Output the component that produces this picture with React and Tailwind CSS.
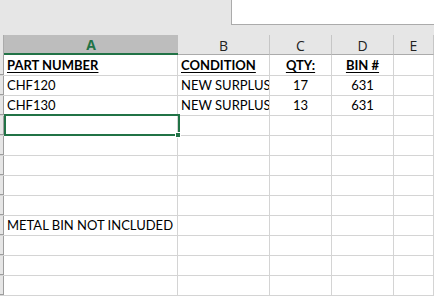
import React from "react";

const cols = [
  { key: "A", w: "w-[174px]" },
  { key: "B", w: "w-[92px]" },
  { key: "C", w: "w-[62px]" },
  { key: "D", w: "w-[62px]" },
  { key: "E", w: "flex-1" },
];

const rows = [
  [
    { t: "PART NUMBER", b: true },
    { t: "CONDITION", b: true },
    { t: "QTY:", b: true, c: true },
    { t: "BIN #", b: true, c: true },
  ],
  [{ t: "CHF120" }, { t: "NEW SURPLUS" }, { t: "17", c: true }, { t: "631", c: true }],
  [{ t: "CHF130" }, { t: "NEW SURPLUS" }, { t: "13", c: true }, { t: "631", c: true }],
  [],
  [],
  [],
  [],
  [],
  [{ t: "METAL BIN NOT INCLUDED", over: true }],
  [],
  [],
  [],
];

function Cell({ col, cell }) {
  return (
    <div
      className={`${col.w} shrink-0 h-full border-r border-[#d4d4d4] flex items-end pb-[1px] ${
        cell && cell.c ? "justify-center" : "px-[3px]"
      } ${cell && cell.over ? "overflow-visible relative z-10" : "overflow-hidden"}`}
    >
      {cell && (
        <span
          className={`whitespace-nowrap leading-[18px] text-[13px] text-black ${
            cell.b ? "font-bold underline underline-offset-2 decoration-[1px]" : ""
          }`}
        >
          {cell.t}
        </span>
      )}
    </div>
  );
}

export default function App() {
  return (
    <div
      className="w-[434px] h-[297px] overflow-hidden bg-white relative"
      style={{ fontFamily: "Lato, 'Open Sans', sans-serif" }}
    >
      {/* formula bar area */}
      <div className="h-[35px] bg-[#e6e6e6] flex justify-end">
        <div className="w-[203px] h-[25px] bg-white border-l border-b border-[#ababab]" />
      </div>

      {/* column headers */}
      <div className="h-[20px] flex bg-[#e6e6e6] font-['Open_Sans',sans-serif] text-[14px]">
        <div className="w-[4px] shrink-0 border-r border-[#ababab] bg-[#e6e6e6]" />
        {cols.map((col, i) => (
          <div
            key={col.key}
            className={`${col.w} shrink-0 h-full flex items-center justify-center ${
              i === 0
                ? "bg-[#bdbdbd] border-b-2 border-[#217346] text-[#217346] font-bold"
                : "border-r border-[#c6c6c6] border-b border-b-[#ababab] text-[#222]"
            }`}
          >
            <span className="leading-none mt-[2px]">{col.key}</span>
          </div>
        ))}
      </div>

      {/* grid body */}
      <div className="relative">
        {rows.map((r, ri) => (
          <div
            key={ri}
            className={`flex border-b border-[#d4d4d4] ${ri === 0 ? "h-[21px]" : "h-[20px]"}`}
          >
            <div className="w-[4px] shrink-0 h-full bg-[#e6e6e6] border-r border-[#9e9e9e] border-b-[1px] border-b-[#9e9e9e]" />
            {cols.map((col, ci) => (
              <Cell key={col.key} col={col} cell={r[ci]} />
            ))}
          </div>
        ))}

        {/* active cell A4 */}
        <div className="absolute left-[4px] top-[59px] w-[176px] h-[22px] border-2 border-[#217346] pointer-events-none" />
        <div className="absolute left-[175px] top-[77px] w-[6px] h-[6px] bg-[#217346] border border-white pointer-events-none" />
      </div>
    </div>
  );
}
